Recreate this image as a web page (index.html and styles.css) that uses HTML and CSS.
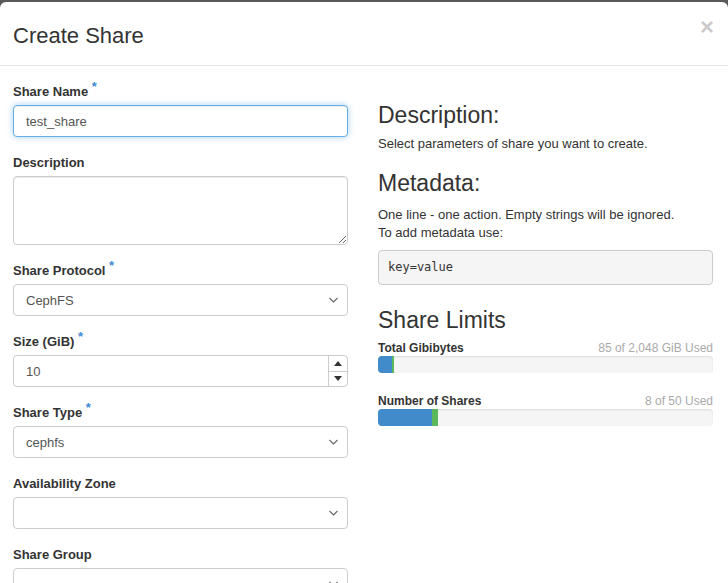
FILE: index.html
```html
<!DOCTYPE html>
<html>
<head>
<meta charset="utf-8">
<link rel="stylesheet" href="styles.css">
</head>
<body>
<div class="modal">
  <div class="modal-header">
    <h4 class="modal-title">Create Share</h4>
    <span class="close">&times;</span>
  </div>
  <div class="modal-body">
    <div class="col left">
      <div class="form-group">
        <label class="lbl">Share Name <span class="req">*</span></label>
        <div class="input focus">test_share</div>
      </div>
      <div class="form-group">
        <label class="lbl">Description</label>
        <textarea class="textarea"></textarea>
      </div>
      <div class="form-group">
        <label class="lbl">Share Protocol <span class="req">*</span></label>
        <div class="input select"><span>CephFS</span><svg class="chev" width="9" height="6" viewBox="0 0 9 6"><path d="M0.5 1l4 4 4-4" fill="none" stroke="#666" stroke-width="1.1"/></svg></div>
      </div>
      <div class="form-group">
        <label class="lbl">Size (GiB) <span class="req">*</span></label>
        <div class="input number"><span class="num-val">10</span><div class="spin"><div class="spin-btn"><svg width="8" height="5" viewBox="0 0 8 5"><path d="M0 5L4 0 8 5z" fill="#333"/></svg></div><div class="spin-btn"><svg width="8" height="5" viewBox="0 0 8 5"><path d="M0 0L4 5 8 0z" fill="#333"/></svg></div></div></div>
      </div>
      <div class="form-group">
        <label class="lbl">Share Type <span class="req">*</span></label>
        <div class="input select"><span>cephfs</span><svg class="chev" width="9" height="6" viewBox="0 0 9 6"><path d="M0.5 1l4 4 4-4" fill="none" stroke="#666" stroke-width="1.1"/></svg></div>
      </div>
      <div class="form-group">
        <label class="lbl">Availability Zone</label>
        <div class="input select"><span></span><svg class="chev" width="9" height="6" viewBox="0 0 9 6"><path d="M0.5 1l4 4 4-4" fill="none" stroke="#666" stroke-width="1.1"/></svg></div>
      </div>
      <div class="form-group">
        <label class="lbl">Share Group</label>
        <div class="input select"><span></span><svg class="chev" width="9" height="6" viewBox="0 0 9 6"><path d="M0.5 1l4 4 4-4" fill="none" stroke="#666" stroke-width="1.1"/></svg></div>
      </div>
    </div>
    <div class="col right">
      <h3 class="h3 first">Description:</h3>
      <p class="p">Select parameters of share you want to create.</p>
      <h3 class="h3 meta">Metadata:</h3>
      <p class="p">One line - one action. Empty strings will be ignored.<br>To add metadata use:</p>
      <pre class="pre">key=value</pre>
      <h3 class="h3 limits">Share Limits</h3>
      <div class="quota">
        <div class="quota-head"><strong>Total Gibibytes</strong><span class="used">85 of 2,048 GiB Used</span></div>
        <div class="progress"><div class="bar blue" style="width:4.15%"></div><div class="bar green" style="width:0.6%"></div></div>
      </div>
      <div class="quota">
        <div class="quota-head"><strong>Number of Shares</strong><span class="used">8 of 50 Used</span></div>
        <div class="progress"><div class="bar blue" style="width:16%"></div><div class="bar green" style="width:2%"></div></div>
      </div>
    </div>
  </div>
</div>
</body>
</html>
```
FILE: styles.css
```css
html, body {
  margin: 0;
  padding: 0;
  height: 100%;
  overflow: hidden;
}
body {
  background: #5a5a5a;
  font-family: "Liberation Sans", Arial, sans-serif;
  font-size: 13px;
  color: #333;
  padding-top: 2px;
  box-sizing: border-box;
}
.modal {
  background: #fff;
  border-radius: 6px 6px 0 0;
  height: 100%;
}
.modal-header {
  display: flex;
  justify-content: space-between;
  align-items: flex-start;
  padding: 18px 15px 14px 13px;
  border-bottom: 1px solid #e5e5e5;
}
.modal-title {
  margin: 0;
  font-size: 22px;
  font-weight: normal;
  line-height: 31px;
  color: #333;
}
.close {
  font-size: 24px;
  font-weight: bold;
  line-height: 20px;
  color: #000;
  opacity: 0.2;
  margin-top: -3px;
  margin-right: -1px;
}
.modal-body {
  display: flex;
  gap: 30px;
  padding: 17px 15px 0 13px;
}
.col {
  width: 335px;
  flex: none;
}
.form-group {
  margin-bottom: 17px;
}
.lbl {
  display: block;
  font-weight: bold;
  font-size: 13px;
  line-height: 18px;
  margin-bottom: 4px;
  color: #333;
}
.req {
  color: #3f8ad1;
  font-size: 13px;
  vertical-align: 5px;
  line-height: 0;
}
.input {
  box-sizing: border-box;
  height: 32px;
  border: 1px solid #ccc;
  border-radius: 4px;
  padding: 0 12px;
  display: flex;
  align-items: center;
  font-size: 13px;
  color: #555;
  background: #fff;
}
.input.focus {
  border-color: #66afe9;
  box-shadow: inset 0 1px 1px rgba(0,0,0,.075), 0 0 6px rgba(102,175,233,.6);
}
.select {
  justify-content: space-between;
  padding-right: 9px;
}
.chev {
  display: block;
}
.number {
  padding-right: 0;
  justify-content: space-between;
}
.spin {
  width: 18px;
  height: 30px;
  display: flex;
  flex-direction: column;
  border-left: 1px solid #ccc;
}
.spin-btn {
  flex: 1;
  display: flex;
  align-items: center;
  justify-content: center;
}
.spin-btn + .spin-btn {
  border-top: 1px solid #ccc;
}
.textarea {
  display: block;
  box-sizing: border-box;
  width: 100%;
  height: 69px;
  border: 1px solid #ccc;
  border-radius: 4px;
  margin: 0;
  font-family: inherit;
  box-shadow: inset 0 1px 1px rgba(0,0,0,.075);
}
.h3 {
  font-size: 23px;
  font-weight: normal;
  line-height: 26px;
  margin: 17px 0 10px;
  color: #333;
}
.h3.first {
  margin-top: 19px;
  margin-bottom: 7px;
}
.h3.limits {
  margin-top: 22px;
  margin-bottom: 7px;
}
.p {
  margin: 0;
  line-height: 18px;
  font-size: 13px;
}
.pre {
  margin: 8px 0 0;
  box-sizing: border-box;
  height: 35px;
  padding: 8px 9px;
  font-family: "DejaVu Sans Mono", monospace;
  font-size: 12px;
  line-height: 17px;
  color: #333;
  background: #f5f5f5;
  border: 1px solid #ccc;
  border-radius: 4px;
}
.quota {
  margin-bottom: 20px;
}
.quota-head {
  display: flex;
  justify-content: space-between;
  font-size: 12px;
  line-height: 16px;
}
.used {
  color: #aaa;
}
.progress {
  display: flex;
  height: 17px;
  background: #f5f5f5;
  border-radius: 4px;
  overflow: hidden;
  box-shadow: inset 0 1px 2px rgba(0,0,0,.1);
}
.bar {
  height: 100%;
}
.blue {
  background: #428bca;
}
.green {
  background: #5cb85c;
}
```
